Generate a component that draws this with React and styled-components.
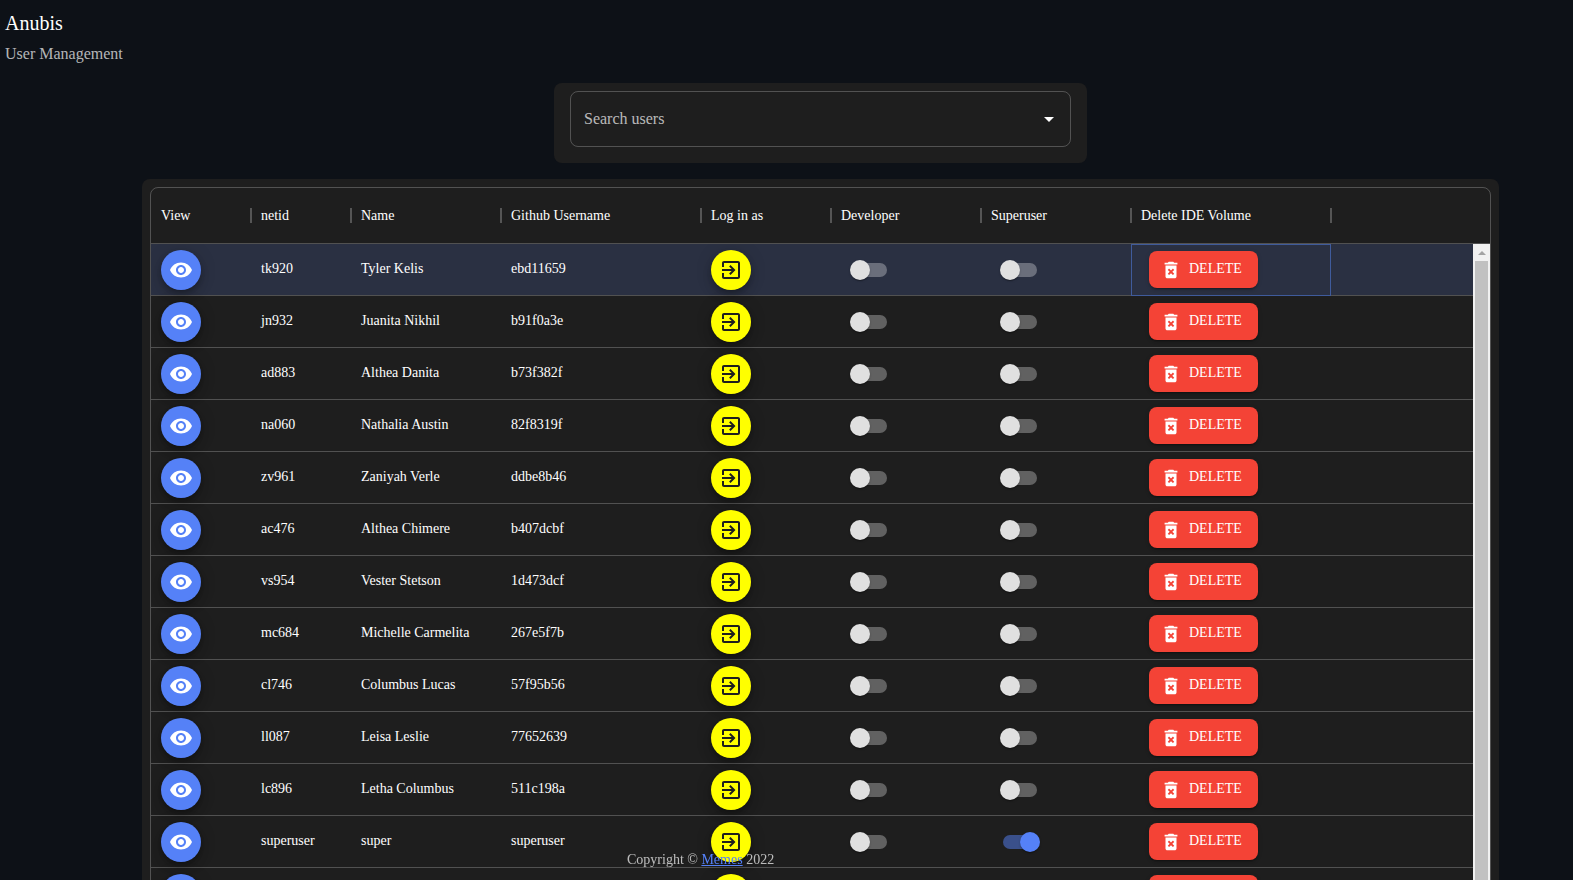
import React from "react";
import styled, { createGlobalStyle } from "styled-components";

const GlobalStyle = createGlobalStyle`
  html, body {
    margin: 0;
    height: 100%;
    overflow: hidden;
    background: #0d1117;
  }
  body {
    font-family: "Liberation Serif", "Times New Roman", serif;
    color: #fff;
  }
  * {
    box-sizing: border-box;
  }
`;

const columns = "100px 100px 150px 200px 130px 150px 150px 200px";

const Page = styled.div`
  height: 100vh;
  overflow: hidden;
`;

const TitleBlock = styled.header`
  height: 83px;
  padding: 12px 5px 0;
`;

const Title = styled.h1`
  margin: 0;
  font-size: 20px;
  font-weight: 400;
  line-height: 23px;
`;

const Subtitle = styled.h2`
  margin: 10px 0 0;
  font-size: 16px;
  font-weight: 400;
  line-height: 18px;
  color: rgba(255, 255, 255, 0.7);
`;

const Main = styled.main`
  display: flex;
  flex-direction: column;
  align-items: center;
  gap: 16px;
  width: 1357px;
  margin-left: 142px;
`;

const SearchPanel = styled.div`
  width: 533px;
  padding: 8px 16px 16px;
  background: #1e1e1e;
  border-radius: 8px;
`;

const SearchBox = styled.div`
  display: flex;
  align-items: center;
  justify-content: space-between;
  height: 56px;
  padding: 0 9px 0 13px;
  border: 1px solid rgba(255, 255, 255, 0.23);
  border-radius: 8px;
`;

const SearchLabel = styled.label`
  font-size: 16px;
  color: rgba(255, 255, 255, 0.7);
`;

const Caret = styled.svg`
  width: 24px;
  height: 24px;
  fill: #fff;
`;

const TablePanel = styled.section`
  width: 100%;
  padding: 8px;
  background: #1e1e1e;
  border-radius: 8px;
`;

const Grid = styled.div`
  border: 1px solid rgba(255, 255, 255, 0.23);
  border-radius: 8px;
  overflow: hidden;
`;

const HeaderRow = styled.div`
  display: grid;
  grid-template-columns: ${columns};
  height: 56px;
  border-bottom: 1px solid #515151;
`;

const HeaderCell = styled.div`
  display: flex;
  align-items: center;
  justify-content: space-between;
  padding-left: 10px;
  font-size: 14px;
`;

const Separator = styled.span`
  width: 2px;
  height: 15px;
  margin-right: -1px;
  background: #555;
`;

const GridBody = styled.div`
  display: flex;
  height: 700px;
  overflow: hidden;
`;

const Rows = styled.div`
  flex: 1;
  min-width: 0;
`;

const ScrollRail = styled.div`
  display: flex;
  flex-direction: column;
  flex: none;
  width: 17px;
  background: #f1f1f1;
`;

const ScrollArrow = styled.div`
  display: flex;
  align-items: center;
  justify-content: center;
  flex: none;
  height: 17px;

  &::before {
    content: "";
    border-left: 4px solid transparent;
    border-right: 4px solid transparent;
    border-bottom: 4px solid #a3a3a3;
  }
`;

const ScrollThumb = styled.div`
  flex: 1;
  margin: 0 2px;
  background: #c1c1c1;
`;

const Row = styled.div`
  display: grid;
  grid-template-columns: ${columns};
  height: 52px;
  border-bottom: 1px solid #515151;
  background: ${(p) => (p.$selected ? "#2a3042" : "transparent")};
`;

const Cell = styled.div`
  display: flex;
  align-items: center;
  padding: 0 10px;
  font-size: 14px;
`;

const DeleteCell = styled(Cell)`
  padding: 0 0 ${(p) => (p.$focused ? "1px" : "0")} 18px;
  margin-bottom: ${(p) => (p.$focused ? "-1px" : "0")};
  outline: ${(p) => (p.$focused ? "1px solid #3f5b9c" : "none")};
  outline-offset: -1px;
`;

const CellText = styled.span`
  margin-top: -1px;
`;

const RoundButton = styled.button`
  display: flex;
  align-items: center;
  justify-content: center;
  width: 40px;
  height: 40px;
  padding: 0;
  border: 0;
  border-radius: 50%;
  background: ${(p) => p.$bg};
  color: ${(p) => p.$fg};
  box-shadow: 0 3px 5px -1px rgba(0, 0, 0, 0.2), 0 6px 10px 0 rgba(0, 0, 0, 0.14),
    0 1px 18px 0 rgba(0, 0, 0, 0.12);
`;

const Icon = styled.svg`
  width: ${(p) => p.$size || 24}px;
  height: ${(p) => p.$size || 24}px;
  fill: currentColor;
  flex: none;
`;

const Switch = styled.span`
  position: relative;
  display: block;
  width: 58px;
  height: 38px;
`;

const SwitchTrack = styled.span`
  position: absolute;
  top: 12px;
  left: 12px;
  width: 34px;
  height: 14px;
  border-radius: 7px;
  background: ${(p) => (p.$on ? "#5581f7" : "#fff")};
  opacity: ${(p) => (p.$on ? 0.5 : 0.3)};
`;

const SwitchThumb = styled.span`
  position: absolute;
  top: 9px;
  left: ${(p) => (p.$on ? "29px" : "9px")};
  width: 20px;
  height: 20px;
  border-radius: 50%;
  background: ${(p) => (p.$on ? "#5581f7" : "#e0e0e0")};
  box-shadow: 0 2px 1px -1px rgba(0, 0, 0, 0.2), 0 1px 1px 0 rgba(0, 0, 0, 0.14),
    0 1px 3px 0 rgba(0, 0, 0, 0.12);
`;

const DeleteButton = styled.button`
  display: flex;
  align-items: center;
  gap: 7px;
  height: 37px;
  width: 109px;
  padding: 0 0 0 11px;
  border: 0;
  border-radius: 8px;
  background: #f44336;
  color: #fff;
  font-family: inherit;
  font-size: 14px;
  text-transform: uppercase;
  box-shadow: 0 3px 1px -2px rgba(0, 0, 0, 0.2), 0 2px 2px 0 rgba(0, 0, 0, 0.14),
    0 1px 5px 0 rgba(0, 0, 0, 0.12);
`;

const DeleteLabel = styled.span`
  margin-top: -1px;
`;

const Footer = styled.footer`
  position: fixed;
  left: 627px;
  bottom: 12px;
  font-size: 14px;
  line-height: 16px;
  color: rgba(255, 255, 255, 0.7);
`;

const FooterLink = styled.a`
  color: #5581f7;
  text-decoration: underline;
`;

const headers = [
  "View",
  "netid",
  "Name",
  "Github Username",
  "Log in as",
  "Developer",
  "Superuser",
  "Delete IDE Volume",
];

// last row is only peeking in at the bottom of the window, its text is never seen
const users = [
  { netid: "tk920", name: "Tyler Kelis", github: "ebd11659" },
  { netid: "jn932", name: "Juanita Nikhil", github: "b91f0a3e" },
  { netid: "ad883", name: "Althea Danita", github: "b73f382f" },
  { netid: "na060", name: "Nathalia Austin", github: "82f8319f" },
  { netid: "zv961", name: "Zaniyah Verle", github: "ddbe8b46" },
  { netid: "ac476", name: "Althea Chimere", github: "b407dcbf" },
  { netid: "vs954", name: "Vester Stetson", github: "1d473dcf" },
  { netid: "mc684", name: "Michelle Carmelita", github: "267e5f7b" },
  { netid: "cl746", name: "Columbus Lucas", github: "57f95b56" },
  { netid: "ll087", name: "Leisa Leslie", github: "77652639" },
  { netid: "lc896", name: "Letha Columbus", github: "511c198a" },
  { netid: "superuser", name: "super", github: "superuser", superuser: true },
  { netid: "", name: "", github: "" },
];

const EyeIcon = () => (
  <Icon viewBox="0 0 24 24">
    <path d="M12 4.5C7 4.5 2.73 7.61 1 12c1.73 4.39 6 7.5 11 7.5s9.27-3.11 11-7.5c-1.73-4.39-6-7.5-11-7.5zM12 17c-2.76 0-5-2.24-5-5s2.24-5 5-5 5 2.24 5 5-2.24 5-5 5zm0-8c-1.66 0-3 1.34-3 3s1.34 3 3 3 3-1.34 3-3-1.34-3-3-3z" />
  </Icon>
);

const LoginIcon = () => (
  <Icon viewBox="0 0 24 24">
    <path d="M10.09 15.59L11.5 17l5-5-5-5-1.41 1.41L12.67 11H3v2h9.67l-2.58 2.59zM19 3H5c-1.11 0-2 .9-2 2v4h2V5h14v14H5v-4H3v4c0 1.1.89 2 2 2h14c1.1 0 2-.9 2-2V5c0-1.11-.9-2-2-2z" />
  </Icon>
);

const TrashIcon = () => (
  <Icon $size={22} viewBox="0 0 24 24">
    <path d="M6 19c0 1.1.9 2 2 2h8c1.1 0 2-.9 2-2V7H6v12zm2.46-7.12l1.41-1.41L12 12.59l2.12-2.12 1.41 1.41L13.41 14l2.12 2.12-1.41 1.41L12 15.41l-2.12 2.12-1.41-1.41L10.59 14l-2.13-2.12zM15.5 4l-1-1h-5l-1 1H5v2h14V4z" />
  </Icon>
);

const Toggle = ({ on }) => (
  <Switch>
    <SwitchTrack $on={on} />
    <SwitchThumb $on={on} />
  </Switch>
);

const UserRow = ({ user, selected }) => (
  <Row $selected={selected}>
    <Cell>
      <RoundButton $bg="#5581f7" $fg="#fff">
        <EyeIcon />
      </RoundButton>
    </Cell>
    <Cell>
      <CellText>{user.netid}</CellText>
    </Cell>
    <Cell>
      <CellText>{user.name}</CellText>
    </Cell>
    <Cell>
      <CellText>{user.github}</CellText>
    </Cell>
    <Cell>
      <RoundButton $bg="#ffff00" $fg="#1e1e1e">
        <LoginIcon />
      </RoundButton>
    </Cell>
    <Cell>
      <Toggle />
    </Cell>
    <Cell>
      <Toggle on={user.superuser} />
    </Cell>
    <DeleteCell $focused={selected}>
      <DeleteButton>
        <TrashIcon />
        {user.netid && <DeleteLabel>Delete</DeleteLabel>}
      </DeleteButton>
    </DeleteCell>
  </Row>
);

export default function App() {
  return (
    <Page>
      <GlobalStyle />
      <TitleBlock>
        <Title>Anubis</Title>
        <Subtitle>User Management</Subtitle>
      </TitleBlock>
      <Main>
        <SearchPanel>
          <SearchBox>
            <SearchLabel>Search users</SearchLabel>
            <Caret viewBox="0 0 24 24">
              <path d="M7 10l5 5 5-5z" />
            </Caret>
          </SearchBox>
        </SearchPanel>
        <TablePanel>
          <Grid>
            <HeaderRow>
              {headers.map((h) => (
                <HeaderCell key={h}>
                  {h}
                  <Separator />
                </HeaderCell>
              ))}
            </HeaderRow>
            <GridBody>
              <Rows>
                {users.map((u, i) => (
                  <UserRow key={i} user={u} selected={i === 0} />
                ))}
              </Rows>
              <ScrollRail>
                <ScrollArrow />
                <ScrollThumb />
              </ScrollRail>
            </GridBody>
          </Grid>
        </TablePanel>
      </Main>
      <Footer>
        Copyright © <FooterLink href="#">Memes</FooterLink> 2022
      </Footer>
    </Page>
  );
}
